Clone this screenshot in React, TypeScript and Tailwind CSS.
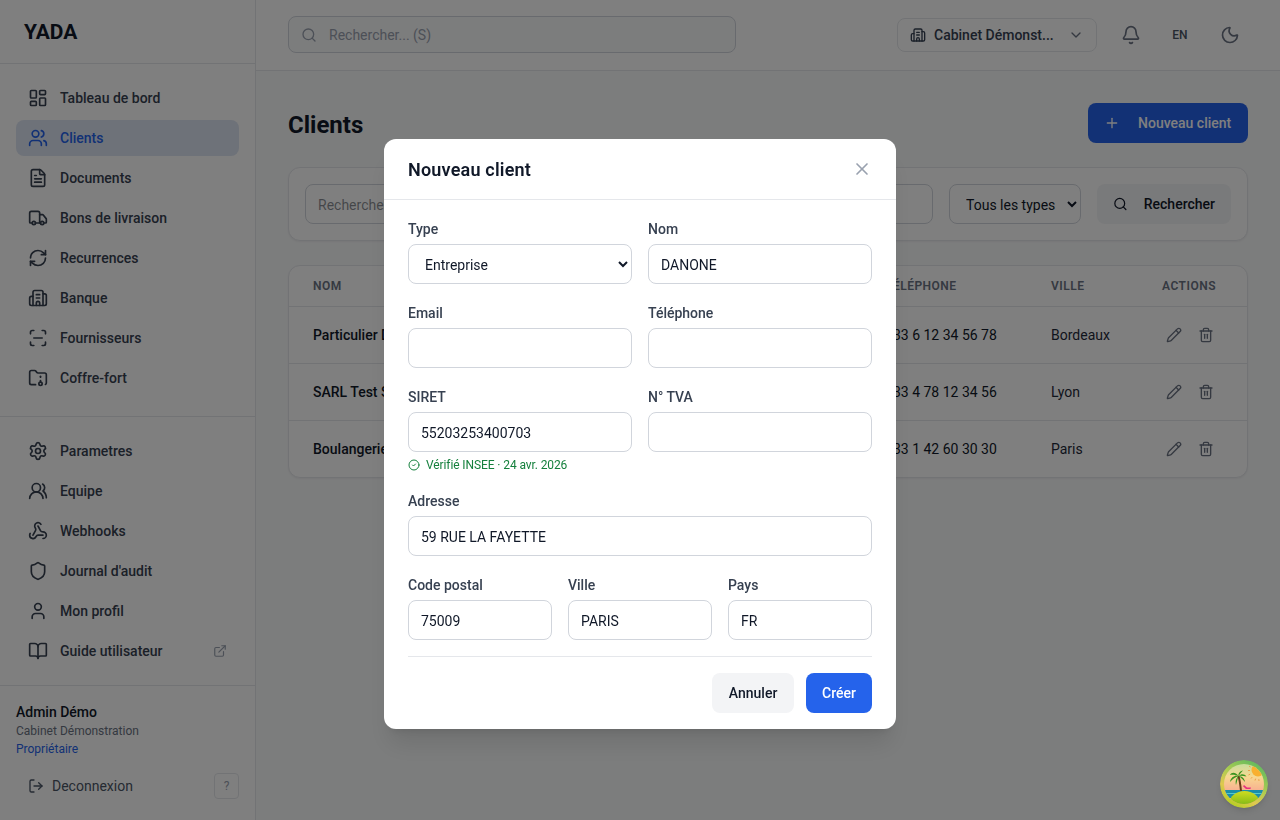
import {
  Bell,
  BookOpen,
  Building2,
  ChevronDown,
  CircleCheck,
  ExternalLink,
  FileText,
  FolderArchive,
  LayoutDashboard,
  LogOut,
  Moon,
  Pencil,
  Plus,
  RefreshCw,
  ScanLine,
  Search,
  Settings,
  Shield,
  Trash2,
  Truck,
  User,
  Users,
  UsersRound,
  Webhook,
  X,
} from 'lucide-react'

const mainNav = [
  { name: 'Tableau de bord', icon: LayoutDashboard },
  { name: 'Clients', icon: Users, active: true },
  { name: 'Documents', icon: FileText },
  { name: 'Bons de livraison', icon: Truck },
  { name: 'Recurrences', icon: RefreshCw },
  { name: 'Banque', icon: Building2 },
  { name: 'Fournisseurs', icon: ScanLine },
  { name: 'Coffre-fort', icon: FolderArchive },
]

const adminNav = [
  { name: 'Parametres', icon: Settings },
  { name: 'Equipe', icon: UsersRound },
  { name: 'Webhooks', icon: Webhook },
  { name: "Journal d'audit", icon: Shield },
  { name: 'Mon profil', icon: User },
  { name: 'Guide utilisateur', icon: BookOpen, external: true },
]

const clients = [
  { name: 'Particulier Dupont', phone: '+33 6 12 34 56 78', city: 'Bordeaux' },
  { name: 'SARL Test Services', phone: '+33 4 78 12 34 56', city: 'Lyon' },
  { name: 'Boulangerie Martin', phone: '+33 1 42 60 30 30', city: 'Paris' },
]

type NavEntry = { name: string; icon: typeof Users; active?: boolean; external?: boolean }

const NavItem = ({ item }: { item: NavEntry }) => {
  const Icon = item.icon
  return (
    <a
      className={
        item.active
          ? 'flex h-9 items-center gap-3 rounded-lg bg-[#dde5f2] px-3 text-sm font-medium text-[#2563eb]'
          : 'flex h-9 items-center gap-3 rounded-lg px-3 text-sm font-medium text-[#374151]'
      }
    >
      <Icon className="h-5 w-5 shrink-0" strokeWidth={2} />
      <span className="flex-1">{item.name}</span>
      {item.external && <ExternalLink className="h-3.5 w-3.5 text-gray-400" />}
    </a>
  )
}

const Field = ({ label, value = '', hint }: { label: string; value?: string; hint?: string }) => (
  <div>
    <label className="mb-[6px] block text-sm leading-[18px] font-medium text-[#374151]">{label}</label>
    <input
      defaultValue={value}
      className="h-10 w-full rounded-lg border border-gray-300 px-3 pt-[2px] text-sm text-gray-900"
    />
    {hint && (
      <p className="mt-[5px] flex items-center gap-1.5 text-xs tracking-[-0.1px] text-[#15803d]">
        <CircleCheck className="h-3 w-3" />
        {hint}
      </p>
    )}
  </div>
)

const IslandAvatar = () => (
  <svg viewBox="0 0 48 48" className="h-12 w-12 rounded-full shadow-md">
    <defs>
      <linearGradient id="ring" x1="0.8" y1="0" x2="0.2" y2="1">
        <stop offset="0" stopColor="#58b860" />
        <stop offset="0.45" stopColor="#b0cc50" />
        <stop offset="0.7" stopColor="#e0c850" />
        <stop offset="1" stopColor="#a8d018" />
      </linearGradient>
      <linearGradient id="sky" x1="0" y1="0" x2="0" y2="1">
        <stop offset="0" stopColor="#b8e0a0" />
        <stop offset="0.35" stopColor="#f8d890" />
        <stop offset="0.7" stopColor="#f8a890" />
      </linearGradient>
      <linearGradient id="hill" x1="0" y1="0" x2="0" y2="1">
        <stop offset="0" stopColor="#d0dc20" />
        <stop offset="1" stopColor="#48a010" />
      </linearGradient>
      <clipPath id="inner">
        <circle cx="24" cy="24" r="20" />
      </clipPath>
    </defs>
    <circle cx="24" cy="24" r="24" fill="url(#ring)" />
    <g clipPath="url(#inner)">
      <rect width="48" height="48" fill="url(#sky)" />
      <circle cx="38" cy="10" r="6.5" fill="#f8b030" />
      <path
        d="M29 6l1.5 1M28 10.5h2M28.5 15l1.6-.8M31 18.5l1.2-1.4M35 20.5l.6-1.8M39 21l-.2-1.8"
        stroke="#e89840"
        strokeWidth="0.9"
      />
      <rect y="30" width="48" height="8" fill="#1a8ea8" />
      <rect y="33" width="48" height="1" fill="#58c8c8" />
      <path d="M24 25l3 2.5h4l-.6 1.6h-4.4l-3-2.8z" fill="#e83080" />
      <path d="M18.5 16c1.5 5 2 10 2.500 15" stroke="#6a3c18" strokeWidth="2" fill="none" />
      <g fill="#3a9420">
        <path d="M18.500 16c-3-4-7-4-8.500-1 3-.8 6 0 8.500 1z" />
        <path d="M18.500 16c-4-1-7.500 1-8.500 6 2.500-3 5.500-5 8.500-6z" />
        <path d="M18.500 16c-2 1.500-3.500 5-2.500 9 1-3.500 1.500-6.500 2.500-9z" />
        <path d="M18.500 16c-.5-2.500 1.500-5 4.500-5.500-1.500 1.500-3 3.500-4.500 5.500z" />
        <path d="M18.500 16c3-2.500 6-2 8 .5-3-.6-5.500-.8-8-.5z" />
        <path d="M18.500 16c3 0 6 2 6.500 6-2-2.500-4-4.500-6.500-6z" />
      </g>
      <ellipse cx="24.500" cy="43" rx="15" ry="12" fill="url(#hill)" />
    </g>
  </svg>
)

export default function App() {
  return (
    <div className="flex h-screen overflow-hidden bg-gray-50 font-[Roboto,sans-serif] text-gray-900">
      {/* Sidebar */}
      <aside className="flex w-64 shrink-0 flex-col border-r border-gray-200 bg-white">
        <div className="flex h-16 items-center border-b border-gray-200 px-6 pt-[3px]">
          <span className="text-[21px] font-bold text-gray-900">YADA</span>
        </div>
        <nav className="flex flex-col gap-1 border-b border-gray-200 px-4 pt-4 pb-5">
          {mainNav.map(item => (
            <NavItem key={item.name} item={item} />
          ))}
        </nav>
        <nav className="flex flex-col gap-1 border-b border-gray-200 px-4 py-4">
          {adminNav.map(item => (
            <NavItem key={item.name} item={item} />
          ))}
        </nav>
        <div className="px-4 pt-4">
          <p className="text-sm font-medium text-gray-900">Admin Démo</p>
          <p className="text-xs leading-[18px] text-gray-500">Cabinet Démonstration</p>
          <p className="text-xs leading-[18px] text-[#2563eb]">Propriétaire</p>
          <div className="mt-[15px] flex items-center justify-between pl-3">
            <button className="flex items-center gap-2 text-sm text-gray-600">
              <LogOut className="h-4 w-4" />
              Deconnexion
            </button>
            <button className="flex h-[26px] w-[25px] items-center justify-center rounded border border-gray-200 text-xs text-gray-400">
              ?
            </button>
          </div>
        </div>
      </aside>

      <div className="flex min-w-0 flex-1 flex-col">
        {/* Header */}
        <header className="flex h-[71px] items-center justify-between border-b border-gray-200 bg-white px-8">
          <div className="mb-[1px] flex h-[37px] w-[448px] items-center gap-3 rounded-lg border border-gray-300 bg-gray-50 px-3">
            <Search className="h-4 w-4 text-gray-400" />
            <span className="text-sm text-gray-400">Rechercher... (S)</span>
          </div>
          <div className="flex items-center">
            <button className="mr-4 flex h-[34px] w-[200px] items-center rounded-lg border border-gray-200 px-3 text-sm font-medium text-gray-700">
              <Building2 className="mr-2 h-4 w-4 shrink-0" />
              <span className="flex-1 text-left whitespace-nowrap">Cabinet Démonst...</span>
              <ChevronDown className="ml-2 h-4 w-4 shrink-0 text-gray-500" />
            </button>
            <button className="flex h-9 w-9 items-center justify-center text-gray-500">
              <Bell className="h-5 w-5" />
            </button>
            <button className="ml-[11px] w-10 text-xs font-medium text-gray-600">EN</button>
            <button className="ml-3 flex h-9 w-9 items-center justify-center text-gray-500">
              <Moon className="h-5 w-5" />
            </button>
          </div>
        </header>

        {/* Page */}
        <main className="px-8 py-8">
          <div className="mb-6 flex items-center justify-between">
            <h1 className="pt-1 text-2xl font-bold text-gray-900">Clients</h1>
            <button className="flex h-10 w-40 items-center gap-[18px] rounded-lg bg-[#2563eb] px-4 text-sm font-medium text-white">
              <Plus className="h-4 w-4" />
              Nouveau client
            </button>
          </div>

          <div className="mb-6 flex gap-4 rounded-xl border border-gray-200 bg-white p-4 shadow-xs">
            <input
              placeholder="Rechercher par nom, email..."
              className="h-10 flex-1 rounded-lg border border-gray-300 px-3 pt-[2px] text-sm"
            />
            <select className="h-10 w-[132px] rounded-lg border border-gray-300 pt-[2px] pr-1 pl-3 text-sm text-gray-900">
              <option>Tous les types</option>
            </select>
            <button className="flex h-10 w-[134px] items-center gap-4 rounded-lg bg-gray-100 px-4 text-sm font-medium text-gray-900">
              <Search className="h-4 w-4" />
              Rechercher
            </button>
          </div>

          <div className="overflow-hidden rounded-xl border border-gray-200 bg-white shadow-xs">
            <table className="w-full table-fixed text-left">
              <thead>
                <tr className="h-[40px] border-b border-gray-200 text-xs font-semibold tracking-[0.5px] text-gray-500 uppercase">
                  <th className="px-6 font-semibold">Nom</th>
                  <th className="w-[166px] px-6 font-semibold">Téléphone</th>
                  <th className="w-[111px] px-6 font-semibold">Ville</th>
                  <th className="w-[109px] px-6 font-semibold">Actions</th>
                </tr>
              </thead>
              <tbody className="text-sm">
                {clients.map(c => (
                  <tr key={c.name} className="h-[57px] border-b border-gray-200 last:border-b-0">
                    <td className="px-6 font-medium whitespace-nowrap text-gray-900">{c.name}</td>
                    <td className="px-6 whitespace-nowrap text-gray-900">{c.phone}</td>
                    <td className="px-6 text-gray-800">{c.city}</td>
                    <td className="px-6">
                      <div className="flex gap-2 text-gray-500">
                        <button className="p-1">
                          <Pencil className="h-4 w-4" />
                        </button>
                        <button className="p-1">
                          <Trash2 className="h-4 w-4" />
                        </button>
                      </div>
                    </td>
                  </tr>
                ))}
              </tbody>
            </table>
          </div>
        </main>
      </div>

      {/* Modal */}
      <div className="fixed inset-0 flex justify-center bg-black/50 pt-[139px]">
        <div className="h-fit w-[512px] rounded-xl bg-white shadow-xl">
          <div className="flex h-[61px] items-center justify-between border-b border-gray-200 px-6">
            <h2 className="pt-[2px] text-lg font-semibold tracking-[0.2px] text-gray-900">Nouveau client</h2>
            <button className="text-gray-400">
              <X className="h-5 w-5" />
            </button>
          </div>
          <form className="px-6 pt-5 pb-4">
            <div className="grid grid-cols-2 gap-x-4 gap-y-5">
              <div>
                <label className="mb-[6px] block text-sm leading-[18px] font-medium text-[#374151]">Type</label>
                <select className="h-10 w-full rounded-lg border border-gray-300 px-3 pt-[2px] text-sm text-gray-900">
                  <option>Entreprise</option>
                  <option>Particulier</option>
                </select>
              </div>
              <Field label="Nom" value="DANONE" />
              <Field label="Email" />
              <Field label="Téléphone" />
              <Field label="SIRET" value="55203253400703" hint="Vérifié INSEE · 24 avr. 2026" />
              <Field label="N° TVA" />
            </div>
            <div className="mt-[19px]">
              <Field label="Adresse" value="59 RUE LA FAYETTE" />
            </div>
            <div className="mt-5 grid grid-cols-3 gap-4">
              <Field label="Code postal" value="75009" />
              <Field label="Ville" value="PARIS" />
              <Field label="Pays" value="FR" />
            </div>
            <div className="mt-4 flex justify-end gap-3 border-t border-gray-200 pt-4">
              <button type="button" className="h-10 w-[82px] rounded-lg bg-gray-100 text-sm font-medium text-gray-900">
                Annuler
              </button>
              <button type="button" className="h-10 rounded-lg bg-[#2563eb] px-4 text-sm font-medium text-white">
                Créer
              </button>
            </div>
          </form>
        </div>
      </div>

      {/* Assistant bubble */}
      <div className="fixed right-3 bottom-3">
        <IslandAvatar />
      </div>
    </div>
  )
}
